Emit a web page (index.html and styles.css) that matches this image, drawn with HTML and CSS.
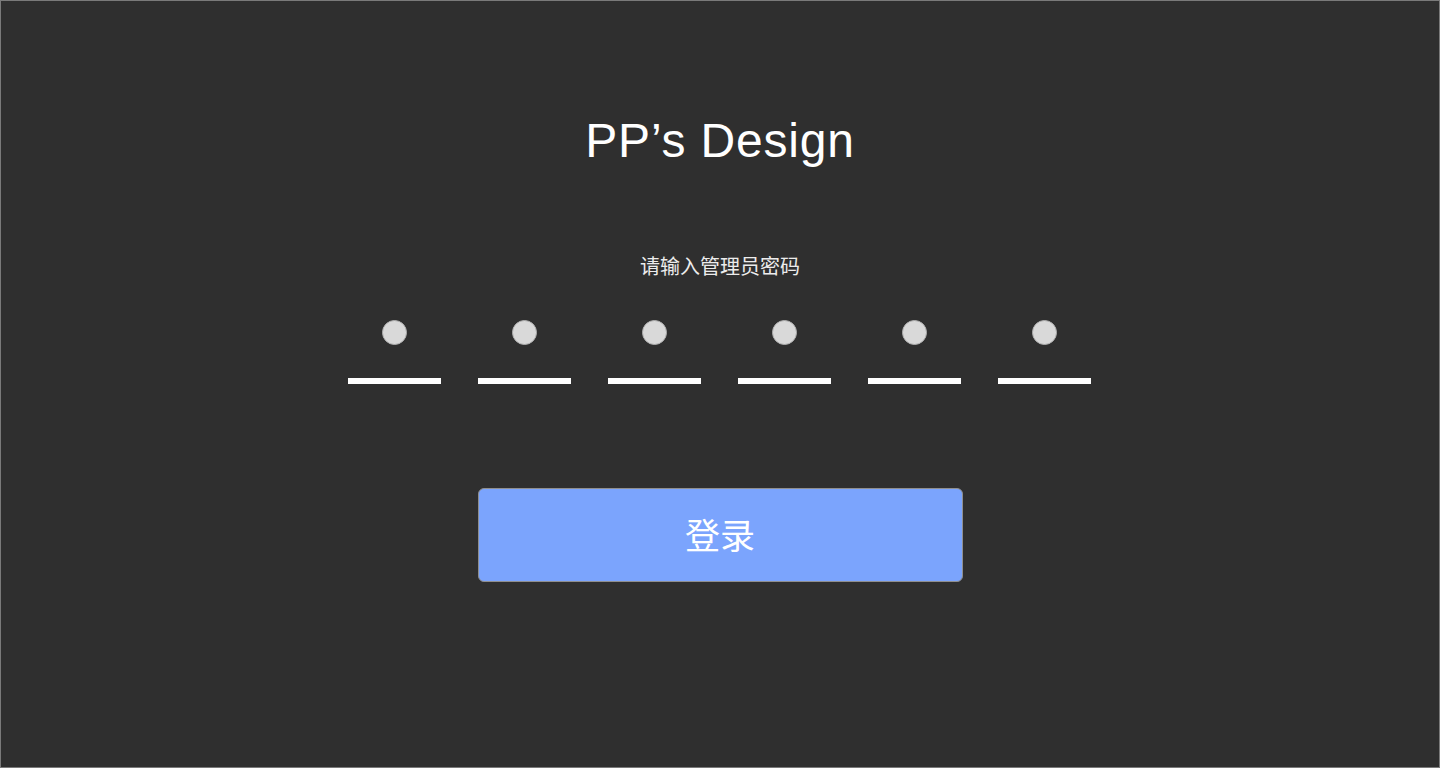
FILE: index.html
```html
<!DOCTYPE html>
<html lang="zh-CN">
<head>
<meta charset="utf-8">
<title>PP's Design</title>
<link rel="stylesheet" href="styles.css">
</head>
<body>
<main class="screen">
  <h1 class="title">PP’s Design</h1>
  <p class="prompt">请输入管理员密码</p>
  <div class="pin">
    <div class="cell"><span class="dot"></span><span class="bar"></span></div>
    <div class="cell"><span class="dot"></span><span class="bar"></span></div>
    <div class="cell"><span class="dot"></span><span class="bar"></span></div>
    <div class="cell"><span class="dot"></span><span class="bar"></span></div>
    <div class="cell"><span class="dot"></span><span class="bar"></span></div>
    <div class="cell"><span class="dot"></span><span class="bar"></span></div>
  </div>
  <button class="login" type="button">登录</button>
</main>
</body>
</html>
```

FILE: styles.css
```css
* { box-sizing: border-box; }
html, body { margin: 0; padding: 0; }
body {
  width: 1440px;
  height: 768px;
  overflow: hidden;
  background: #2f2f2f;
  font-family: "Liberation Sans", "Noto Sans CJK SC", sans-serif;
}
.screen {
  width: 1440px;
  height: 768px;
  border: 1px solid #7a7a7a;
  background: #2f2f2f;
  display: flex;
  flex-direction: column;
  align-items: center;
  padding-top: 112px;
}
.title {
  margin: 0;
  font-family: "Liberation Sans", sans-serif;
  font-weight: 400;
  font-size: 48px;
  line-height: 56px;
  color: #ffffff;
  letter-spacing: 0.8px;
}
.prompt {
  margin: 83px 0 0;
  font-family: "Noto Sans CJK SC", sans-serif;
  font-size: 20px;
  line-height: 28px;
  color: #ececec;
}
.pin {
  margin-top: 40px;
  padding-right: 1px;
  display: flex;
  gap: 37px;
}
.cell {
  width: 93px;
  display: flex;
  flex-direction: column;
  align-items: center;
  gap: 33px;
}
.dot {
  display: block;
  width: 25px;
  height: 25px;
  border-radius: 50%;
  background: #d9d9d9;
  border: 1px solid #b0b0b0;
}
.bar {
  display: block;
  width: 93px;
  height: 6px;
  background: #ffffff;
}
.login {
  margin-top: 104px;
  width: 485px;
  height: 94px;
  border: 1px solid #8f8f8f;
  border-radius: 6px;
  background: #7ba4fd;
  color: #ffffff;
  font-family: "Noto Sans CJK SC", sans-serif;
  font-size: 35px;
  line-height: 40px;
  padding: 0 0 3px;
  cursor: pointer;
}
```
